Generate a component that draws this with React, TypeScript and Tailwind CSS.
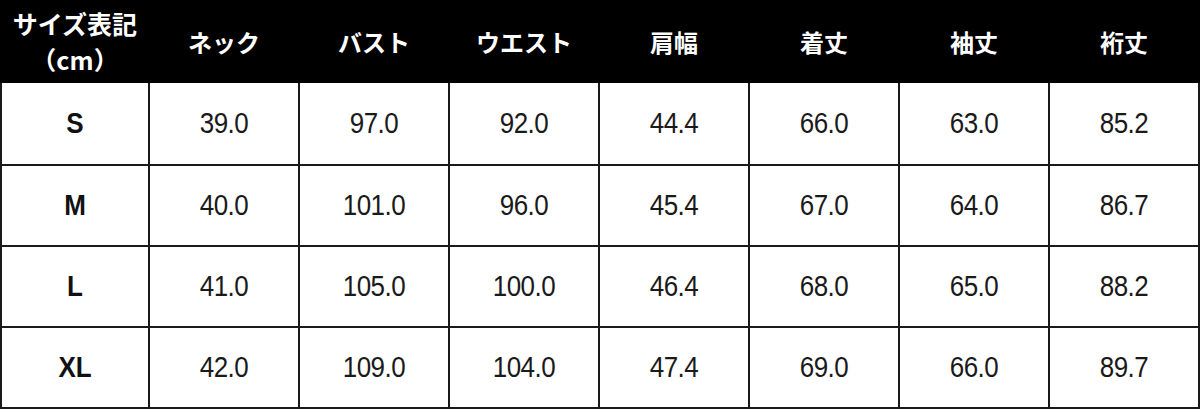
const HEADERS = ["ネック", "バスト", "ウエスト", "肩幅", "着丈", "袖丈", "裄丈"];

const ROWS = [
  { size: "S", values: ["39.0", "97.0", "92.0", "44.4", "66.0", "63.0", "85.2"] },
  { size: "M", values: ["40.0", "101.0", "96.0", "45.4", "67.0", "64.0", "86.7"] },
  { size: "L", values: ["41.0", "105.0", "100.0", "46.4", "68.0", "65.0", "88.2"] },
  { size: "XL", values: ["42.0", "109.0", "104.0", "47.4", "69.0", "66.0", "89.7"] },
];

const jp = "font-['Noto_Sans_CJK_JP',sans-serif]";
const num = "font-['Liberation_Sans',sans-serif]";

export default function App() {
  return (
    <div className="w-[1200px] h-[410px] bg-white overflow-hidden">
      {/* header */}
      <div className={`grid grid-cols-[150px_150px_150px_150px_150px_150px_150px_150px] h-[83px] bg-black text-white font-bold ${jp}`}>
        <div className="flex flex-col items-center justify-center text-[25px] leading-[36px] -mt-[2px]">
          <span>サイズ表記</span>
          <span>（cm）</span>
        </div>
        {HEADERS.map((h) => (
          <div key={h} className="flex items-center justify-center text-[24px] pr-[2px]">
            {h}
          </div>
        ))}
      </div>

      {/* body */}
      <div className="border-l-2 border-r-2 border-b-2 border-[#1a1a1a] w-[1200px]">
        {ROWS.map((row, i) => (
          <div
            key={row.size}
            className={`grid grid-cols-[148px_150px_150px_150px_150px_150px_150px_148px] h-[81px] ${i > 0 ? "border-t-2 border-[#1a1a1a]" : ""}`}
          >
            <div className={`flex items-center justify-center font-bold text-[26px] text-[#111] ${num} border-r-2 border-[#1a1a1a]`}>
              <span className="scale-y-[1.12]">{row.size}</span>
            </div>
            {row.values.map((v, j) => (
              <div
                key={j}
                className={`flex items-center justify-center text-[26px] tracking-[-0.5px] text-[#1a1a1a] ${num} ${j < 6 ? "border-r-2 border-[#1a1a1a]" : ""}`}
              >
                <span className="scale-y-[1.12]">{v}</span>
              </div>
            ))}
          </div>
        ))}
      </div>
    </div>
  );
}
